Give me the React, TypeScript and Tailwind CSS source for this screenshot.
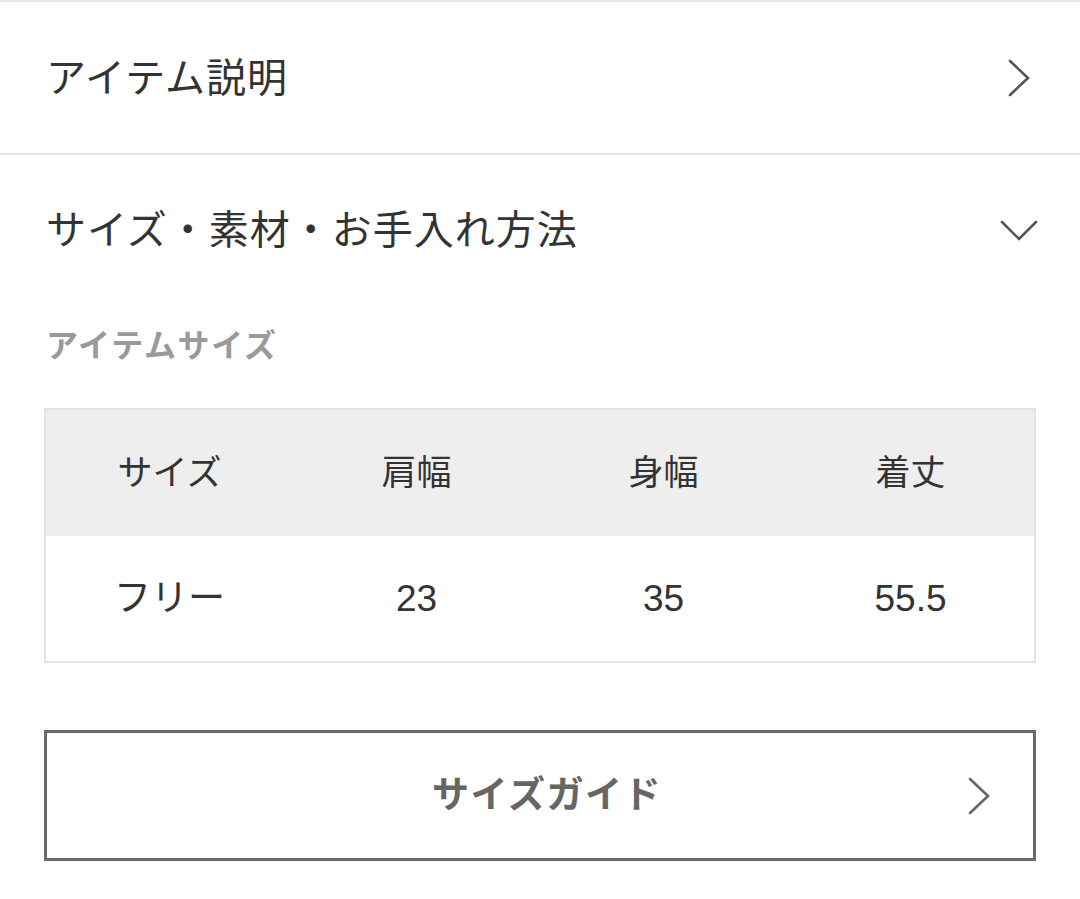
import React from "react";

const font = { fontFamily: '"Liberation Sans", "Noto Sans CJK JP", sans-serif' };

function ChevronRight({ color = "#555" }: { color?: string }) {
  return (
    <svg width="24" height="38" viewBox="0 0 24 38" fill="none">
      <polyline points="3,2 21,19 3,36" stroke={color} strokeWidth="2.6" strokeLinecap="round" strokeLinejoin="miter" />
    </svg>
  );
}

function ChevronDown() {
  return (
    <svg width="38" height="22" viewBox="0 0 38 22" fill="none">
      <polyline points="2,3 19,20 36,3" stroke="#555" strokeWidth="2.6" strokeLinecap="round" strokeLinejoin="miter" />
    </svg>
  );
}

export default function App() {
  const headers = ["サイズ", "肩幅", "身幅", "着丈"];
  const values = ["フリー", "23", "35", "55.5"];
  return (
    <div className="w-[1080px] h-[899px] bg-white text-[#333] overflow-hidden" style={font}>
      <div className="border-t-2 border-[#e6e6e6] h-[153px] flex items-center justify-between pl-[46px] pr-[49px]">
        <span className="text-[40px] leading-[48px] tracking-[1px]">アイテム説明</span>
        <ChevronRight />
      </div>
      <div className="h-[2px] bg-[#e3e3e3]" />
      <div className="h-[150px] flex items-center justify-between pl-[46px] pr-[42px]">
        <span className="text-[40px] leading-[48px] tracking-[1px]">サイズ・素材・お手入れ方法</span>
        <ChevronDown />
      </div>
      <div className="px-[44px]">
        <div className="mt-[21px] text-[32px] leading-[40px] font-bold text-[#9a9a9a] pl-[2px] tracking-[1.7px]">アイテムサイズ</div>
        <div className="mt-[42px] border-2 border-[#e4e4e4]">
          <div className="grid grid-cols-4 h-[126px] bg-[#eeeeee] items-center">
            {headers.map((h) => (
              <div key={h} className="text-center text-[35px] leading-[44px]">{h}</div>
            ))}
          </div>
          <div className="grid grid-cols-4 h-[125px] bg-white items-center">
            {values.map((v) => (
              <div key={v} className="text-center text-[37px] leading-[44px]">{v}</div>
            ))}
          </div>
        </div>
        <div className="mt-[67px] h-[131px] border-[3px] border-[#6a6a6a] flex items-center relative">
          <span className="flex-1 text-center pl-[14px] text-[37px] leading-[44px] font-bold text-[#666] tracking-[1.5px]">サイズガイド</span>
          <div className="absolute right-[42px] top-1/2 -translate-y-1/2 flex">
            <ChevronRight color="#666" />
          </div>
        </div>
      </div>
    </div>
  );
}
